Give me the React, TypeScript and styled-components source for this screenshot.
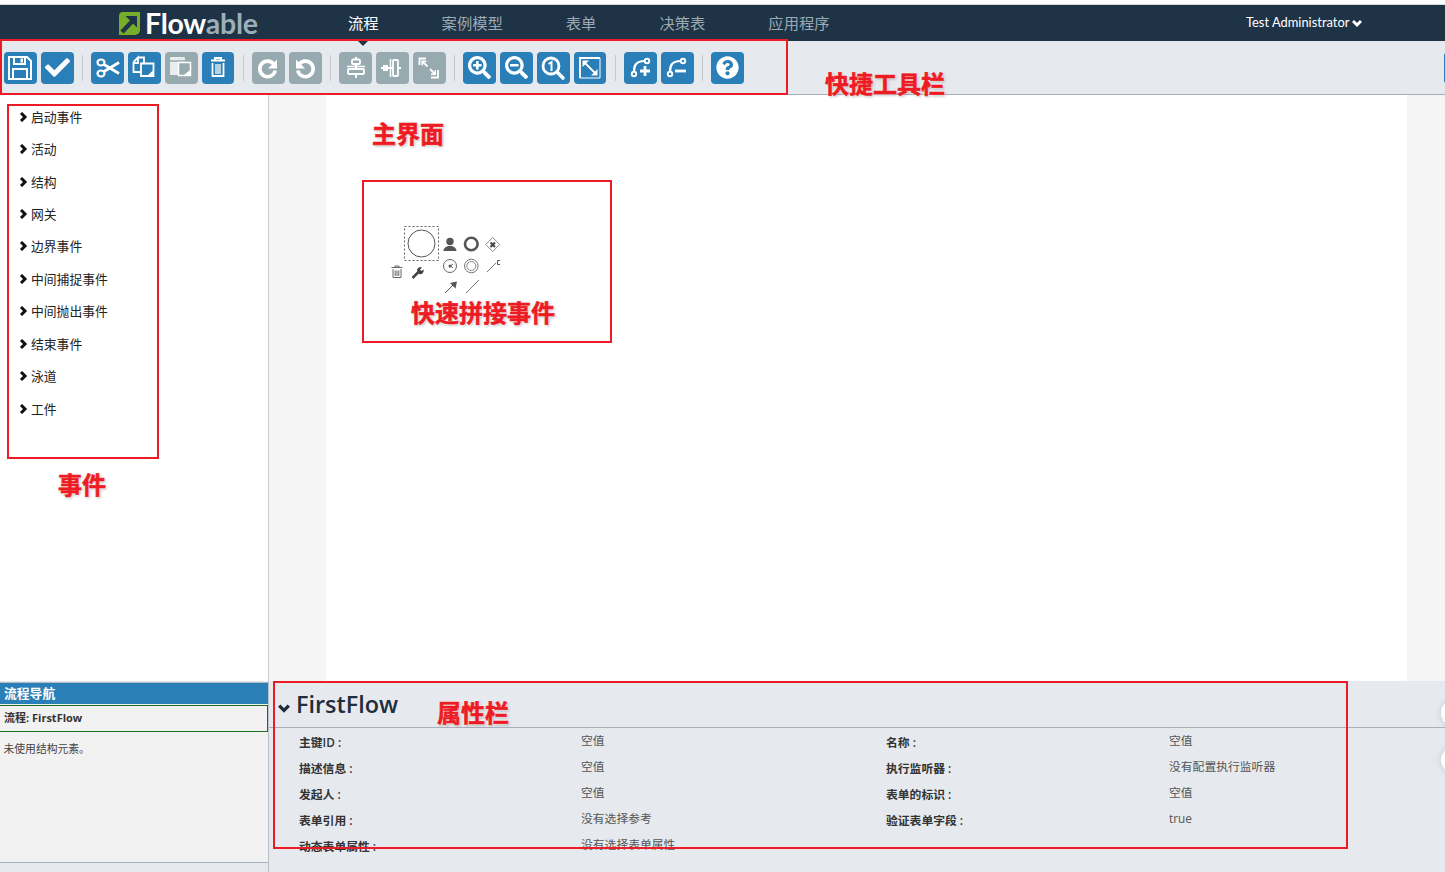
import { Fragment } from 'react';
import type { ReactNode } from 'react';
import styled, { createGlobalStyle } from 'styled-components';
import { FaCheck, FaQuestionCircle, FaSearchMinus, FaSearchPlus } from 'react-icons/fa';

const cjk = `"Noto Sans CJK SC", sans-serif`;

const GlobalStyle = createGlobalStyle`
  html, body { margin: 0; padding: 0; background: #fff; }
  body { font-family: "Open Sans", ${cjk}; overflow: hidden; }
`;

const Page = styled.div`
  position: relative;
  width: 1445px;
  height: 872px;
  overflow: hidden;
  display: flex;
  flex-direction: column;
  padding-top: 4px;
  box-sizing: border-box;
`;

const Navbar = styled.header`
  height: 36px;
  flex: none;
  border-top: 1px solid #d9d9d9;
  background: #1f3347;
  display: flex;
  align-items: center;
  position: relative;
`;

const Logo = styled.div`
  width: 348px;
  padding-left: 119px;
  box-sizing: border-box;
  display: flex;
  align-items: center;
  gap: 5px;
`;

const LogoWord = styled.span`
  font-family: "Lato", sans-serif;
  font-size: 28.5px;
  font-weight: 700;
  letter-spacing: -0.25px;
  line-height: 36px;
  color: #fff;
`;

const LogoGrey = styled.span`
  color: #9cafb7;
`;

const NavItem = styled.a<{ $active?: boolean; $gap: number }>`
  font-family: ${cjk};
  font-size: 15.3px;
  line-height: 34px;
  margin-bottom: 2px;
  margin-right: ${p => p.$gap}px;
  color: ${p => (p.$active ? '#fff' : '#9aabb3')};
`;

const UserMenu = styled.div`
  position: absolute;
  left: 1246px;
  top: 0;
  line-height: 35px;
  font-family: "Lato", sans-serif;
  font-size: 12.9px;
  color: #fff;
  display: flex;
  align-items: center;
  gap: 3px;
`;

const NavCaret = styled.div`
  position: absolute;
  left: 358px;
  top: 41px;
  width: 0;
  height: 0;
  border-left: 5px solid transparent;
  border-right: 5px solid transparent;
  border-top: 5px solid #1f3347;
  z-index: 2;
`;

const Toolbar = styled.div`
  height: 53px;
  flex: none;
  background: #e6eaee;
  border-bottom: 1px solid #a6aebb;
  display: flex;
  align-items: center;
  padding-left: 4px;
  gap: 4px;
  overflow: hidden;
`;

const ToolButton = styled.div<{ $off?: boolean }>`
  width: 32.75px;
  height: 32px;
  flex: none;
  border-radius: 4px;
  background: ${p => (p.$off ? '#96aab0' : '#2a7fb8')};
  color: #fff;
  display: flex;
  align-items: center;
  justify-content: center;
`;

const ToolSeparator = styled.div`
  width: 1px;
  height: 26px;
  flex: none;
  margin: 0 4.4px;
  background: #c4c9cc;
`;

const EdgeButton = styled(ToolButton)`
  margin-left: auto;
  margin-right: -32px;
`;

const Workspace = styled.div`
  height: 586px;
  flex: none;
  display: flex;
`;

const Palette = styled.aside`
  width: 250px;
  flex: none;
  background: #fff;
  border-right: 1px solid #cccccc;
  padding: 5px 0 0 18px;
`;

const PaletteRow = styled.div`
  height: 32.44px;
  display: flex;
  align-items: center;
  gap: 3px;
  font-family: ${cjk};
  font-size: 12.8px;
  color: #222;

  & > svg {
    margin-top: 1px;
  }
`;

const Canvas = styled.main`
  flex: 1;
  background: #f5f5f5;
  padding: 0 38px 0 57px;
  display: flex;
`;

const CanvasSheet = styled.div`
  flex: 1;
  position: relative;
  background: #fff;
`;

const ShapeLayer = styled.svg`
  position: absolute;
  left: 55px;
  top: 120px;
`;

const BottomArea = styled.div`
  flex: 1;
  display: flex;
  min-height: 0;
`;

const NavigatorPanel = styled.section`
  width: 268px;
  flex: none;
  background: #e6eaee;
  border-right: 1px solid #b9c0c8;
  display: flex;
  flex-direction: column;
`;

const NavigatorHeader = styled.div`
  height: 21px;
  margin-top: 1px;
  background: #2a7fb8;
  border-top: 1px solid #b5bcc4;
  color: #fff;
  font-family: ${cjk};
  font-size: 12.8px;
  font-weight: 700;
  line-height: 19px;
  padding-left: 4px;
`;

const NavigatorBody = styled.div`
  height: 159px;
  background: #f2f2f2;
  border-bottom: 1px solid #a6aebb;
  padding-top: 1px;
  box-sizing: border-box;
`;

const NavigatorRow = styled.div`
  height: 25px;
  border: 1px solid #1f6f1f;
  border-left: none;
  font-family: "Open Sans", ${cjk};
  font-size: 11px;
  font-weight: 700;
  line-height: 24px;
  color: #333;
  padding-left: 4px;
`;

const NavigatorNote = styled.div`
  font-family: ${cjk};
  font-size: 10.8px;
  line-height: 16px;
  color: #444;
  padding: 8px 0 0 3.5px;
`;

const PropertyPanel = styled.section`
  flex: 1;
  position: relative;
  background: #e6eaee;
`;

const PropertyHeader = styled.div`
  height: 47px;
  border-bottom: 1px solid #a9afbd;
  display: flex;
  align-items: flex-end;
  gap: 6px;
  padding: 0 0 6px 9px;
  box-sizing: border-box;
`;

const PropertyTitle = styled.h2`
  margin: 0;
  font-family: "Open Sans", sans-serif;
  font-size: 23.4px;
  font-weight: 600;
  line-height: 34px;
  color: #1f2d3d;
`;

const HeaderChevron = styled.svg`
  margin-bottom: 7px;
`;

const PropertyGrid = styled.div`
  display: grid;
  grid-template-columns: 282px 305px 283px 1fr;
  grid-auto-rows: 26px;
  padding: 0 0 0 30px;
`;

const PropertyLabel = styled.div`
  font-family: "Open Sans", ${cjk};
  font-size: 11.8px;
  font-weight: 600;
  line-height: 24px;
  color: #333;
  padding-top: 2px;
`;

const PropertyValue = styled.div`
  font-family: "Open Sans", ${cjk};
  font-size: 11.8px;
  line-height: 24px;
  color: #555;
`;

const SideDot = styled.div<{ $top: number }>`
  position: absolute;
  right: -24px;
  top: ${p => p.$top}px;
  width: 28px;
  height: 28px;
  border-radius: 50%;
  background: #fff;
  box-shadow: 0 0 6px rgba(0, 0, 0, 0.15);
`;

const RedBox = styled.div<{ $x: number; $y: number; $w: number; $h: number }>`
  position: absolute;
  left: ${p => p.$x}px;
  top: ${p => p.$y}px;
  width: ${p => p.$w}px;
  height: ${p => p.$h}px;
  border: 2px solid #ed1c24;
  box-sizing: border-box;
  pointer-events: none;
`;

const RedLabel = styled.div<{ $x: number; $y: number }>`
  position: absolute;
  left: ${p => p.$x}px;
  top: ${p => p.$y}px;
  font-family: ${cjk};
  font-size: 24px;
  font-weight: 700;
  line-height: 30px;
  color: #ed1c24;
  -webkit-text-stroke: 0.6px #ed1c24;
  text-shadow: 0 0 2px #fff, 0 0 3px #fff, 1px 1px 3px rgba(0, 0, 0, 0.4);
  white-space: nowrap;
`;

const Glyph = ({ children }: { children: ReactNode }) => (
  <svg width="26" height="26" viewBox="0 0 26 26" fill="none" stroke="#fff" strokeWidth="2">
    {children}
  </svg>
);

const SaveIcon = () => (
  <Glyph>
    <path d="M2 2h18l4 4v18H2z" strokeWidth="2" />
    <path d="M7 2v7h11V2" strokeWidth="2" />
    <rect x="13.500" y="3.500" width="2.500" height="4" fill="#fff" stroke="none" />
    <path d="M6 24V14h14v10" strokeWidth="2" />
  </Glyph>
);

const CutIcon = () => (
  <Glyph>
    <ellipse cx="6" cy="7.500" rx="3.500" ry="3" strokeWidth="2.200" />
    <ellipse cx="6" cy="18.500" rx="3.500" ry="3" strokeWidth="2.200" />
    <path d="M9 9.500l15 9M9 16.500l15-9" strokeWidth="2.800" />
  </Glyph>
);

const CopyIcon = () => (
  <Glyph>
    <path d="M7 2.500h6v5.500M2.500 7L7 2.500V8H2.500v9H10" strokeWidth="1.800" />
    <path d="M10 8.500h12.500v12.500H10z" strokeWidth="1.800" />
    <path d="M16 21l6.500-6v6z" fill="#fff" stroke="none" />
  </Glyph>
);

const PasteIcon = () => (
  <Glyph>
    <rect x="2" y="2" width="15" height="18" rx="1" fill="#e8eef0" stroke="none" />
    <path d="M2 6h15" stroke="#96aab0" strokeWidth="1.500" />
    <rect x="10.500" y="7.500" width="12" height="13" fill="#96aab0" stroke="#fff" strokeWidth="1.500" />
    <path d="M16 20l6-5v5z" fill="#fff" stroke="none" />
  </Glyph>
);

const TrashIcon = () => (
  <Glyph>
    <path d="M6 5.500h14M10 5V3h6v2" strokeWidth="2" />
    <path d="M7.500 8v13h11V8" strokeWidth="1.800" />
    <path d="M11 9v10M13 9v10M15 9v10" strokeWidth="1.300" />
  </Glyph>
);

const RedoIcon = () => (
  <Glyph>
    <path d="M19 9.500a7.800 7.800 0 1 0 1.200 6" strokeWidth="3.600" />
    <path d="M22 4.500v9h-9z" fill="#fff" stroke="none" />
  </Glyph>
);

const UndoIcon = () => (
  <Glyph>
    <g transform="matrix(-1 0 0 1 26 0)">
      <path d="M19 9.500a7.800 7.800 0 1 0 1.200 6" strokeWidth="3.600" />
      <path d="M22 4.500v9h-9z" fill="#fff" stroke="none" />
    </g>
  </Glyph>
);

const AlignVertical = () => (
  <Glyph>
    <rect x="9" y="4.500" width="8" height="4.500" rx="1" strokeWidth="1.800" />
    <path d="M13 2v3M13 9v5M13 19v4" strokeWidth="2" />
    <path d="M4 11.500h18" strokeWidth="1.500" />
    <rect x="5" y="14" width="16" height="5" rx="1" strokeWidth="1.800" />
  </Glyph>
);

const AlignHorizontal = () => (
  <Glyph>
    <rect x="4" y="10" width="5" height="6" fill="#fff" stroke="none" />
    <path d="M2 13h2M9 13h5" strokeWidth="2" />
    <path d="M11.500 4v18" strokeWidth="1.500" />
    <rect x="14" y="5" width="5" height="16" rx="1" strokeWidth="1.800" />
    <path d="M19 13h3" strokeWidth="2" />
  </Glyph>
);

const SameSize = () => (
  <Glyph>
    <path d="M10 3.500H3.500v6.500" strokeWidth="1.800" />
    <path d="M6 6l5.500 5.500" strokeWidth="1.800" />
    <path d="M5.500 5.500h5v1.500h-3.500v3.500h-1.500z" fill="#fff" stroke="none" />
    <path d="M15 22.500h7V15" strokeWidth="1.800" />
    <path d="M14 14l5.500 5.500" strokeWidth="1.800" />
    <path d="M20 20h-5v-1.500h3.500V15H20z" fill="#fff" stroke="none" />
  </Glyph>
);

const ZoomActual = () => (
  <Glyph>
    <circle cx="11" cy="11" r="8" strokeWidth="2.800" />
    <path d="M17 17l6 6" strokeWidth="3.600" strokeLinecap="round" />
    <path d="M8.500 9l3-2v9" strokeWidth="2" />
  </Glyph>
);

const ZoomFit = () => (
  <Glyph>
    <path d="M3 23V3h20" strokeWidth="1.800" />
    <path d="M23 3v20H3" strokeWidth="1" />
    <path d="M7 7l12 12" strokeWidth="1.800" />
    <path d="M5.500 12V5.500H12zM20.500 14v6.500H14z" fill="#fff" stroke="none" />
  </Glyph>
);

const Waypoint = ({ add }: { add?: boolean }) => (
  <Glyph>
    <circle cx="6" cy="19" r="2.200" />
    <circle cx="19" cy="6" r="2.200" />
    <path d="M6 16.500C6 10 8 6.500 16.500 6" strokeWidth="2.200" />
    {add ? <path d="M12 16h10M17 11v10" strokeWidth="2.800" /> : <path d="M11 16h11" strokeWidth="2.800" />}
  </Glyph>
);

const LogoMark = () => (
  <svg width="21" height="23" viewBox="0 0 21 23">
    <path d="M4 0h17v18a5 5 0 0 1-5 5H0V4a4 4 0 0 1 4-4z" fill="#76ad2a" />
    <path d="M3 20L15 7.500" stroke="#1f3347" strokeWidth="4.500" />
    <path d="M6.500 4H18v11.500z" fill="#1f3347" />
  </svg>
);

const Chevron = ({ size, color, down }: { size: number; color: string; down?: boolean }) => (
  <svg width={size} height={size} viewBox="0 0 10 10" fill="none" stroke={color} strokeWidth="3">
    <path d={down ? 'M1 3l4 4 4-4' : 'M3 1l4 4-4 4'} />
  </svg>
);

const toolGroups: { icon: ReactNode; off?: boolean }[][] = [
  [{ icon: <SaveIcon /> }, { icon: <FaCheck size={25} /> }],
  [{ icon: <CutIcon /> }, { icon: <CopyIcon /> }, { icon: <PasteIcon />, off: true }, { icon: <TrashIcon /> }],
  [
    { icon: <RedoIcon />, off: true },
    { icon: <UndoIcon />, off: true },
  ],
  [
    { icon: <AlignVertical />, off: true },
    { icon: <AlignHorizontal />, off: true },
    { icon: <SameSize />, off: true },
  ],
  [
    { icon: <FaSearchPlus size={23} /> },
    { icon: <FaSearchMinus size={23} /> },
    { icon: <ZoomActual /> },
    { icon: <ZoomFit /> },
  ],
  [{ icon: <Waypoint add /> }, { icon: <Waypoint /> }],
  [{ icon: <FaQuestionCircle size={23} /> }],
];

const navItems = [
  { label: '流程', gap: 63, active: true },
  { label: '案例模型', gap: 63 },
  { label: '表单', gap: 63 },
  { label: '决策表', gap: 63 },
  { label: '应用程序', gap: 0 },
];

const paletteItems = ['启动事件', '活动', '结构', '网关', '边界事件', '中间捕捉事件', '中间抛出事件', '结束事件', '泳道', '工件'];

const properties = [
  ['主键ID :', '空值', '名称 :', '空值'],
  ['描述信息 :', '空值', '执行监听器 :', '没有配置执行监听器'],
  ['发起人 :', '空值', '表单的标识 :', '空值'],
  ['表单引用 :', '没有选择参考', '验证表单字段 :', 'true'],
  ['动态表单属性 :', '没有选择表单属性'],
];

// quick-connect icons around the selected start event, coords are relative to the svg
const ShapeMenu = () => (
  <ShapeLayer width="130" height="90" viewBox="0 0 130 90" fill="none">
    <rect x="23.500" y="11.500" width="34" height="34" stroke="#666" strokeDasharray="2 2" />
    <circle cx="40.500" cy="28.500" r="13.500" stroke="#555" />
    {/* trash */}
    <path d="M10.500 52.500h11M14 52.500v-1.500h4v1.500M12 54v8.500h8V54M14.200 55.500v5.500M16 55.500v5.500M17.800 55.500v5.500" stroke="#666" />
    {/* wrench */}
    <path d="M31.500 63L38 56.500" stroke="#444" strokeWidth="2.500" />
    <path d="M36 55a3.500 3.500 0 0 1 5-2.500l-2 2 1.500 1.500 2-1.500a3.500 3.500 0 0 1-4.500 4.500z" fill="#444" />
    {/* user */}
    <circle cx="69" cy="26.500" r="3.700" fill="#555" />
    <path d="M62.500 36c0-3.500 3-4 4.500-5h4c1.500 1 4.500 1.500 4.500 5z" fill="#555" />
    {/* end event */}
    <circle cx="90.300" cy="29" r="6.300" stroke="#555" strokeWidth="2.600" />
    {/* exclusive gateway */}
    <path d="M111.700 22.500l7 7-7 7-7-7z" stroke="#888" />
    <path d="M109.500 27.500l4.500 4.500M114 27.500l-4.500 4.500" stroke="#444" strokeWidth="2" />
    {/* intermediate */}
    <circle cx="69" cy="51" r="6.500" stroke="#666" />
    <circle cx="69" cy="51" r="1.500" fill="#555" />
    <path d="M72 49l-2.500 2 2.500 2" stroke="#666" />
    <circle cx="90.300" cy="51" r="6.800" stroke="#777" />
    <circle cx="90.300" cy="51" r="4.500" stroke="#888" />
    {/* association */}
    <path d="M106 57l9-9" stroke="#777" />
    <path d="M119 45.500h-2.500v4h2.500" stroke="#555" />
    {/* arrow + flow */}
    <path d="M64 78l9-9" stroke="#555" />
    <path d="M76 66.500l-1.500 7-5.500-5.500z" fill="#555" />
    <path d="M85 78l13-13" stroke="#777" />
  </ShapeLayer>
);

export default function App() {
  return (
    <Page>
      <GlobalStyle />
      <Navbar>
        <Logo>
          <LogoMark />
          <LogoWord>
            Flow<LogoGrey>able</LogoGrey>
          </LogoWord>
        </Logo>
        {navItems.map(item => (
          <NavItem key={item.label} $active={item.active} $gap={item.gap}>
            {item.label}
          </NavItem>
        ))}
        <UserMenu>
          Test Administrator <Chevron size={10} color="#fff" down />
        </UserMenu>
      </Navbar>
      <NavCaret />

      <Toolbar>
        {toolGroups.map((group, i) => (
          <Fragment key={i}>
            {i > 0 && <ToolSeparator />}
            {group.map((tool, j) => (
              <ToolButton key={j} $off={tool.off}>
                {tool.icon}
              </ToolButton>
            ))}
          </Fragment>
        ))}
        <EdgeButton />
      </Toolbar>

      <Workspace>
        <Palette>
          {paletteItems.map(name => (
            <PaletteRow key={name}>
              <Chevron size={10} color="#111" />
              {name}
            </PaletteRow>
          ))}
        </Palette>
        <Canvas>
          <CanvasSheet>
            <ShapeMenu />
          </CanvasSheet>
        </Canvas>
      </Workspace>

      <BottomArea>
        <NavigatorPanel>
          <NavigatorHeader>流程导航</NavigatorHeader>
          <NavigatorBody>
            <NavigatorRow>流程: FirstFlow</NavigatorRow>
            <NavigatorNote>未使用结构元素。</NavigatorNote>
          </NavigatorBody>
        </NavigatorPanel>
        <PropertyPanel>
          <PropertyHeader>
            <HeaderChevron width="12" height="12" viewBox="0 0 10 10" fill="none" stroke="#1f2d3d" strokeWidth="2.800">
              <path d="M1 3l4 4 4-4" />
            </HeaderChevron>
            <PropertyTitle>FirstFlow</PropertyTitle>
          </PropertyHeader>
          <PropertyGrid>
            {properties.map(row =>
              row.map((text, i) =>
                i % 2 === 0 ? (
                  <PropertyLabel key={text}>{text}</PropertyLabel>
                ) : (
                  <PropertyValue key={`${row[0]}-${i}`}>{text}</PropertyValue>
                ),
              ),
            )}
          </PropertyGrid>
          <SideDot $top={18} />
          <SideDot $top={65} />
        </PropertyPanel>
      </BottomArea>

      <RedBox $x={0} $y={39} $w={788} $h={56} />
      <RedBox $x={7} $y={104} $w={152} $h={355} />
      <RedBox $x={362} $y={180} $w={250} $h={163} />
      <RedBox $x={273} $y={681} $w={1075} $h={168} />
      <RedLabel $x={825} $y={68}>快捷工具栏</RedLabel>
      <RedLabel $x={372} $y={118}>主界面</RedLabel>
      <RedLabel $x={411} $y={297}>快速拼接事件</RedLabel>
      <RedLabel $x={58} $y={469}>事件</RedLabel>
      <RedLabel $x={437} $y={697}>属性栏</RedLabel>
    </Page>
  );
}
